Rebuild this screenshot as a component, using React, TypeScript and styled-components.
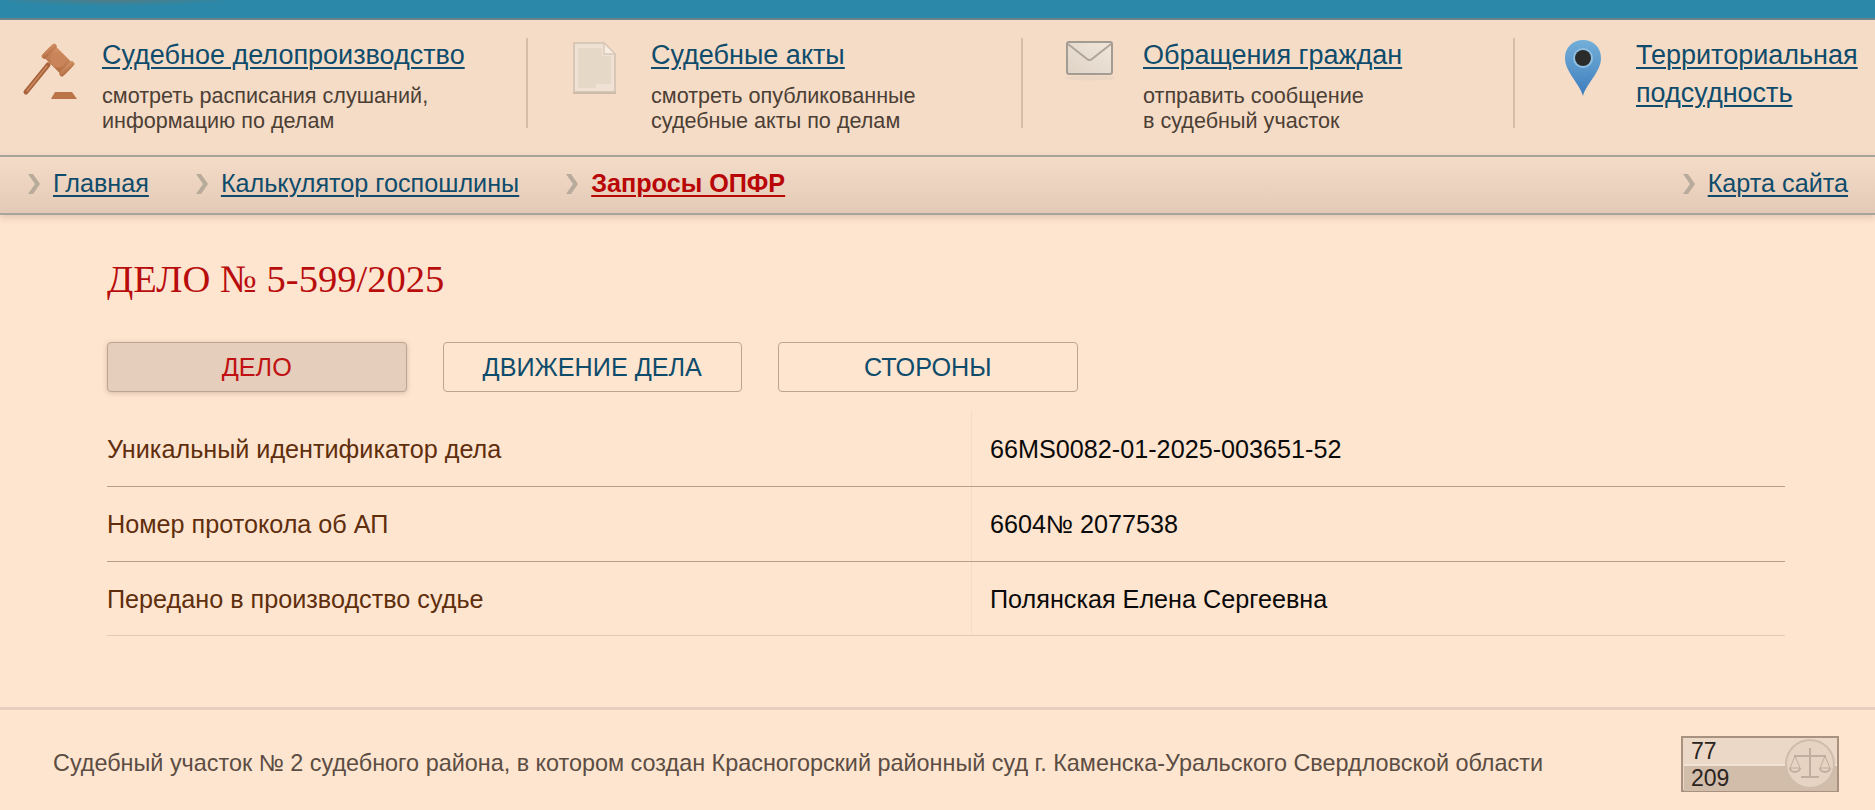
import React from "react";
import styled, { createGlobalStyle } from "styled-components";

const Global = createGlobalStyle`
  html, body { margin: 0; padding: 0; background: #fee5d0; overflow: hidden; }
  body { font-family: "Liberation Sans", Arial, sans-serif; }
`;
const Page = styled.div`
  width: 1875px;
  height: 810px;
  display: flex;
  flex-direction: column;
  overflow: hidden;
`;
const TopBar = styled.div`
  height: 18px;
  flex: none;
  background: radial-gradient(ellipse 120px 6px at 115px 0, rgba(110, 115, 105, 0.55), transparent), #2b88a8;
  border-bottom: 2px solid #6c8288;
  box-sizing: content-box;
`;
const Services = styled.div`
  height: 135px;
  flex: none;
  background: #f5dcc7;
  display: grid;
  grid-template-columns: 528px 495px 492px 1fr;
  padding-top: 18px;
  box-sizing: border-box;
`;
const Service = styled.div<{ $last?: boolean; $pad: number }>`
  height: 90px;
  display: flex;
  padding-left: ${(p) => p.$pad}px;
  border-right: ${(p) => (p.$last ? "none" : "2px solid #d7bda8")};
  box-sizing: border-box;
`;
const IconBox = styled.div<{ $w: number }>`
  width: ${(p) => p.$w}px;
  flex: none;
  svg { display: block; }
`;
const ServiceText = styled.div`
  display: flex;
  flex-direction: column;
  margin-top: -1px;
`;
const ServiceLink = styled.a`
  font-size: 27px;
  line-height: 37.5px;
  color: #0f4c6b;
  text-decoration: underline;
  text-decoration-thickness: 2px;
  text-underline-offset: 3px;
`;
const ServiceNote = styled.div`
  margin-top: 8.5px;
  font-size: 21.6px;
  line-height: 25px;
  color: #4c3f35;
`;
const Nav = styled.nav`
  height: 60px;
  flex: none;
  display: flex;
  align-items: center;
  padding: 0 27px 4px 27px;
  box-sizing: border-box;
  background: linear-gradient(#f5dcc8, #e2cab6);
  border-top: 2px solid #a9a39d;
  border-bottom: 2px solid #a9a39d;
  box-shadow: 0 3px 6px rgba(170, 140, 115, 0.3);
`;
const Crumb = styled.div<{ $gap: number; $push?: boolean }>`
  display: flex;
  align-items: center;
  gap: 12px;
  margin-right: ${(p) => p.$gap}px;
  margin-left: ${(p) => (p.$push ? "auto" : "0")};
  svg { margin-top: 2px; }
`;
const NavLink = styled.a<{ $active?: boolean }>`
  font-size: 25.2px;
  font-weight: ${(p) => (p.$active ? 700 : 400)};
  color: ${(p) => (p.$active ? "#b90606" : "#0f4c6b")};
  text-decoration: underline;
  text-decoration-thickness: 2px;
  text-underline-offset: 3px;
`;
const Main = styled.main`
  flex: 1;
  padding: 36px 90px 0 107px;
  display: flex;
  flex-direction: column;
`;
const Title = styled.h1`
  margin: 0;
  font-family: "Liberation Serif", Georgia, serif;
  font-weight: 400;
  font-size: 38.6px;
  line-height: 56px;
  color: #b90d0d;
`;
const Tabs = styled.div`
  margin-top: 35px;
  display: flex;
  gap: 36px;
`;
const Tab = styled.a<{ $active?: boolean }>`
  width: 299.5px;
  height: 50px;
  box-sizing: border-box;
  display: flex;
  align-items: center;
  justify-content: center;
  font-size: 25.2px;
  border-radius: 4px;
  border: 1px solid #bba592;
  color: ${(p) => (p.$active ? "#c01212" : "#0f4c6b")};
  background: ${(p) => (p.$active ? "#e5cebb" : "transparent")};
  box-shadow: ${(p) => (p.$active ? "0 1px 5px rgba(120, 90, 70, 0.3)" : "none")};
`;
const Table = styled.div`
  margin-top: 19px;
  display: flex;
  flex-direction: column;
`;
const Row = styled.div<{ $soft?: boolean }>`
  height: 75px;
  display: grid;
  grid-template-columns: 865px 1fr;
  border-bottom: 1px solid ${(p) => (p.$soft ? "#e2cab6" : "#b99d8a")};
  box-sizing: border-box;
  font-size: 25.2px;
  &:first-child { height: 76px; }
  &:last-child { height: 74px; }
`;
const Label = styled.div`
  display: flex;
  align-items: center;
  padding-top: 1px;
  color: #5e2e0d;
  border-right: 1px solid #f5dcc8;
`;
const Value = styled.div`
  display: flex;
  align-items: center;
  padding: 1px 0 0 18px;
  color: #0a0a0a;
`;
const Footer = styled.footer`
  height: 103px;
  flex: none;
  box-sizing: border-box;
  border-top: 3px solid #e6cfbc;
  display: flex;
  align-items: center;
  justify-content: space-between;
  padding: 7px 36px 0 53px;
`;
const FooterText = styled.div`
  font-size: 23.4px;
  color: #5b4d43;
`;
const Counter = styled.div`
  position: relative;
  width: 158px;
  height: 56px;
  box-sizing: border-box;
  border: 2px solid #a8917f;
  background: #ecd8c6;
  padding: 1px 0 0 1px;
  font-size: 23px;
  line-height: 25px;
  color: #2a2420;
  display: flex;
  flex-direction: column;
`;
const CounterRow = styled.div<{ $dark?: boolean }>`
  height: 26px;
  padding-left: 7px;
  background: ${(p) => (p.$dark ? "#d2bdab" : "#ecd8c6")};
  border-top: ${(p) => (p.$dark ? "2px solid #f2e2d4" : "none")};
`;
const CounterSeal = styled.svg`
  position: absolute;
  right: 0;
  top: 0;
`;

const Gavel = () => (
  <svg width="60" height="64" viewBox="0 0 60 64">
    <defs>
      <linearGradient id="g" x1="0" y1="0" x2="1" y2="1">
        <stop offset="0" stopColor="#d69468" />
        <stop offset="1" stopColor="#b06a40" />
      </linearGradient>
    </defs>
    <path d="M4 54 L26 27" stroke="#a9623a" strokeWidth="5" strokeLinecap="round" />
    <path d="M5 53 L25 28" stroke="#c98a60" strokeWidth="1.5" strokeLinecap="round" />
    <g transform="rotate(45 36 22)" fill="url(#g)">
      <rect x="21" y="14" width="30" height="16" rx="4" />
      <rect x="21" y="12.5" width="5" height="19" rx="2" />
      <rect x="46" y="12.5" width="5" height="19" rx="2" />
      <circle cx="36" cy="22" r="7.5" fill="#c98559" />
    </g>
    <path d="M29 61 L33 54 H50 L55 61 Z" fill="#bb7448" />
  </svg>
);
const Doc = () => (
  <svg width="50" height="60" viewBox="0 0 50 60">
    <path d="M3 5 H33 L44 16 V54 H3 Z" fill="#efe2d4" stroke="#d1c1b0" strokeWidth="1.6" />
    <path d="M33 5 V16 H44 Z" fill="#f9eee3" stroke="#d8c9b9" strokeWidth="1.4" />
    <path d="M7 10 H31 V18 H40 V46 H25 V50 H7 Z" fill="#e6d8c7" />
    <path d="M2 55 H45" stroke="#cdbcaa" strokeWidth="2" />
  </svg>
);
const Mail = () => (
  <svg width="52" height="44" viewBox="0 0 52 44">
    <defs>
      <linearGradient id="m" x1="0" y1="1" x2="1" y2="0">
        <stop offset="0" stopColor="#dfd3c6" />
        <stop offset="1" stopColor="#f0e6da" />
      </linearGradient>
    </defs>
    <ellipse cx="26" cy="40" rx="25" ry="2.5" fill="#ead6c3" />
    <rect x="3" y="4" width="45" height="32" rx="2" fill="url(#m)" stroke="#a49b92" strokeWidth="2" />
    <path d="M4 6 L23 21 Q25.5 23 28 21 L47 6" fill="none" stroke="#afa59b" strokeWidth="2" />
  </svg>
);
const Pin = () => (
  <svg width="44" height="64" viewBox="0 0 44 64">
    <defs>
      <linearGradient id="p" x1="0" y1="0" x2="0" y2="1">
        <stop offset="0" stopColor="#74afd9" />
        <stop offset="1" stopColor="#3d7dbd" />
      </linearGradient>
    </defs>
    <path d="M21 58 C18 46 3 34 3 20 C3 9 11 2 21 2 C31 2 39 9 39 20 C39 34 24 46 21 58 Z" fill="url(#p)" />
    <circle cx="21" cy="20" r="10" fill="#8fbfe0" />
    <circle cx="21" cy="20" r="8" fill="#2b2b2b" />
  </svg>
);
const Chevron = () => (
  <svg width="14" height="20" viewBox="0 0 14 20">
    <path d="M1 0 H6 L13 10 L6 20 H1 L8 10 Z" fill="#b9ab9b" />
  </svg>
);
const Scales = () => (
  <CounterSeal width="54" height="52" viewBox="0 0 54 52">
    <circle cx="27" cy="26" r="24" fill="#e6d3c2" stroke="#d0bdab" strokeWidth="2" />
    <g fill="none" stroke="#c0ae9e" strokeWidth="2">
      <path d="M27 10 V38 M18 39 H36 M11 18 H43" />
      <path d="M7 30 L12 18 L17 30 Z M37 30 L42 18 L47 30 Z" strokeWidth="1" />
      <path d="M7 30 a5 4 0 0 0 10 0 M37 30 a5 4 0 0 0 10 0" />
    </g>
  </CounterSeal>
);

const services = [
  { pad: 22, icon: <Gavel />, w: 80, title: ["Судебное делопроизводство"], note: ["смотреть расписания слушаний,", "информацию по делам"] },
  { pad: 43, icon: <Doc />, w: 80, title: ["Судебные акты"], note: ["смотреть опубликованные", "судебные акты по делам"] },
  { pad: 41, icon: <Mail />, w: 79, title: ["Обращения граждан"], note: ["отправить сообщение", "в судебный участок"] },
  { pad: 47, icon: <Pin />, w: 74, title: ["Территориальная", "подсудность"], note: [] as string[] },
];

const rows = [
  ["Уникальный идентификатор дела", "66MS0082-01-2025-003651-52"],
  ["Номер протокола об АП", "6604№ 2077538"],
  ["Передано в производство судье", "Полянская Елена Сергеевна"],
];

export default function App() {
  return (
    <Page>
      <Global />
      <TopBar />
      <Services>
        {services.map((s, i) => (
          <Service key={i} $pad={s.pad} $last={i === services.length - 1}>
            <IconBox $w={s.w}>{s.icon}</IconBox>
            <ServiceText>
              {s.title.map((t) => (
                <ServiceLink key={t} href="#">{t}</ServiceLink>
              ))}
              {s.note.length > 0 && (
                <ServiceNote>
                  {s.note.map((n) => (
                    <div key={n}>{n}</div>
                  ))}
                </ServiceNote>
              )}
            </ServiceText>
          </Service>
        ))}
      </Services>
      <Nav>
        <Crumb $gap={46}><Chevron /><NavLink href="#">Главная</NavLink></Crumb>
        <Crumb $gap={46}><Chevron /><NavLink href="#">Калькулятор госпошлины</NavLink></Crumb>
        <Crumb $gap={0}><Chevron /><NavLink href="#" $active>Запросы ОПФР</NavLink></Crumb>
        <Crumb $gap={0} $push><Chevron /><NavLink href="#">Карта сайта</NavLink></Crumb>
      </Nav>
      <Main>
        <Title>ДЕЛО № 5-599/2025</Title>
        <Tabs>
          <Tab $active>ДЕЛО</Tab>
          <Tab>ДВИЖЕНИЕ ДЕЛА</Tab>
          <Tab>СТОРОНЫ</Tab>
        </Tabs>
        <Table>
          {rows.map(([a, b], i) => (
            <Row key={a} $soft={i === 2}>
              <Label>{a}</Label>
              <Value>{b}</Value>
            </Row>
          ))}
        </Table>
      </Main>
      <Footer>
        <FooterText>Судебный участок № 2 судебного района, в котором создан Красногорский районный суд г. Каменска-Уральского Свердловской области</FooterText>
        <Counter>
          <CounterRow>77</CounterRow>
          <CounterRow $dark>209</CounterRow>
          <Scales />
        </Counter>
      </Footer>
    </Page>
  );
}
